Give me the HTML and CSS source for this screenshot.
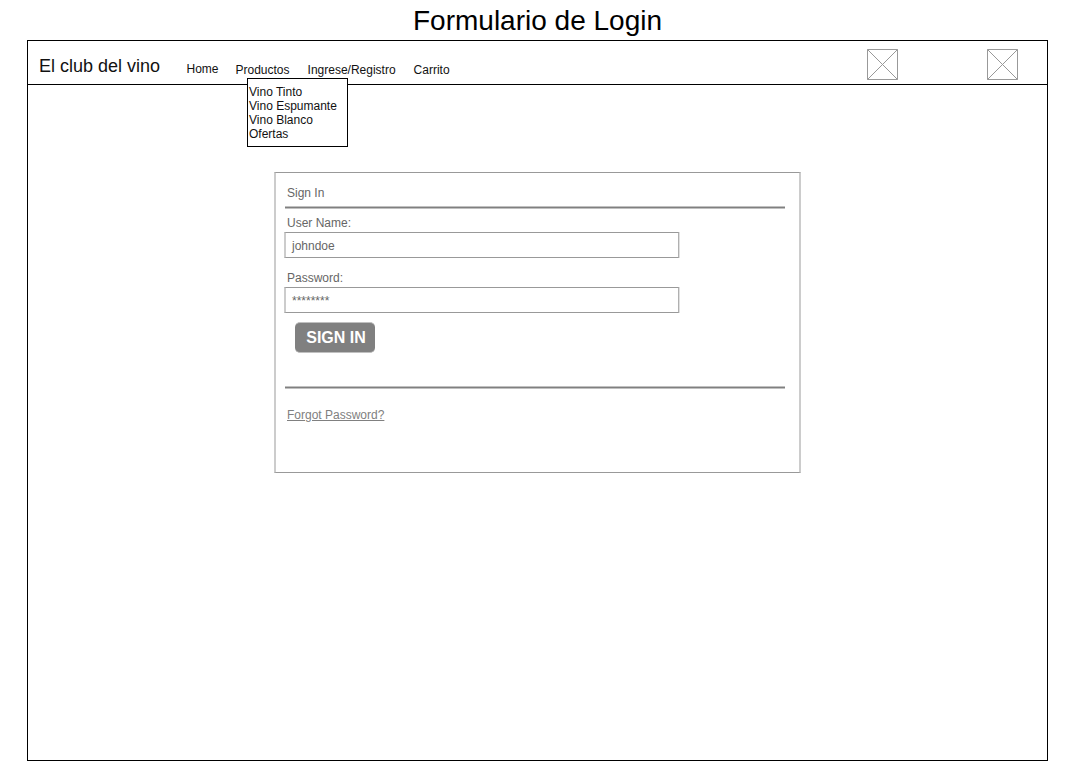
FILE: index.html
```html
<!DOCTYPE html>
<html lang="es">
<head>
<meta charset="utf-8">
<title>Formulario de Login</title>
<link rel="stylesheet" href="styles.css">
</head>
<body>
<h1 class="page-title">Formulario de Login</h1>
<div class="window">
  <header class="topbar">
    <div class="brand">El club del vino</div>
    <nav class="nav">
      <a class="nav-item nav-home">Home</a>
      <div class="nav-item nav-products">Productos
        <ul class="dropdown">
          <li>Vino Tinto</li>
          <li>Vino Espumante</li>
          <li>Vino Blanco</li>
          <li>Ofertas</li>
        </ul>
      </div>
      <a class="nav-item nav-register">Ingrese/Registro</a>
      <a class="nav-item">Carrito</a>
    </nav>
    <div class="images">
      <svg class="placeholder" viewBox="0 0 31 31"><path d="M.5.5h30v30H.5zL30.5 30.5M30.5.5L.5 30.5"/></svg>
      <svg class="placeholder" viewBox="0 0 31 31"><path d="M.5.5h30v30H.5zL30.5 30.5M30.5.5L.5 30.5"/></svg>
    </div>
  </header>
  <main class="login">
    <h2 class="login-title">Sign In</h2>
    <div class="rule"></div>
    <div class="label label-user">User Name:</div>
    <div class="field">johndoe</div>
    <div class="label label-pass">Password:</div>
    <div class="field">********</div>
    <div class="button">SIGN IN</div>
    <div class="rule rule-bottom"></div>
    <a class="forgot">Forgot Password?</a>
  </main>
</div>
</body>
</html>
```

FILE: styles.css
```css
* {
  box-sizing: border-box;
}

body {
  margin: 0;
  background: #fff;
  color: #111;
  font: 12px/14px "Liberation Sans", Arial, sans-serif;
}

.page-title {
  width: 1021px;
  height: 40px;
  margin: 0 0 0 27px;
  padding-top: 5px;
  color: #000;
  font-size: 28px;
  font-weight: 400;
  line-height: 32px;
  text-align: center;
}

.window {
  width: 1021px;
  height: 721px;
  margin-left: 27px;
  border: 1px solid #000;
}

.topbar {
  display: flex;
  height: 44px;
  border-bottom: 1px solid #000;
}

.brand {
  width: 158.5px;
  padding: 15px 0 0 11px;
  font-size: 18px;
  line-height: 20px;
  white-space: nowrap;
}

.nav {
  display: flex;
  flex: 1;
  gap: 18px;
  padding-top: 22px;
}

.nav-home {
  margin-top: -1px;
  margin-right: -1px;
}

.nav-products {
  position: relative;
}

.dropdown {
  position: absolute;
  top: 15px;
  left: 11.5px;
  width: 101px;
  height: 69px;
  margin: 0;
  padding: 6px 0 0 1px;
  border: 1px solid #000;
  background: #fff;
  list-style: none;
  white-space: nowrap;
}

.images {
  display: flex;
  gap: 89px;
  padding: 8px 29px 0 0;
}

.placeholder {
  width: 31px;
  height: 31px;
  fill: none;
  stroke: #999;
}

.login {
  width: 527px;
  height: 301px;
  margin: 87px 0 0 246px;
  padding-left: 8px;
  border: solid;
  border-width: 1px 2px;
  border-color: #999 #ccc;
  color: #666;
}

.login-title {
  margin: 13px 0 0 3px;
  font: inherit;
}

.rule {
  width: 500px;
  height: 3px;
  margin: 6px 0 0 1px;
  border: solid #c0c0c0;
  border-width: 1px 0;
  background: #808080;
}

.label {
  margin-left: 3px;
}

.label-user {
  margin-top: 7px;
}

.label-pass {
  margin-top: 13px;
}

.field {
  width: 395px;
  height: 26px;
  margin-top: 2px;
  padding: 6px 0 0 6px;
  border: solid;
  border-width: 1px 1px 1px 2px;
  border-color: #999 #b0b0b0 #999 #ccc;
  box-shadow: 1px 0 #e0e0e0;
}

.button {
  width: 80px;
  height: 31px;
  margin: 9px 0 0 11px;
  padding-left: 2px;
  border: solid #c0c0c0;
  border-width: 1px 0;
  border-radius: 5px;
  background: #808080;
  color: #fff;
  font-size: 16px;
  font-weight: 700;
  line-height: 29px;
  text-align: center;
}

.rule-bottom {
  margin-top: 33px;
}

.forgot {
  display: block;
  margin: 19px 0 0 3px;
  color: #808080;
  text-decoration: underline;
}
```
